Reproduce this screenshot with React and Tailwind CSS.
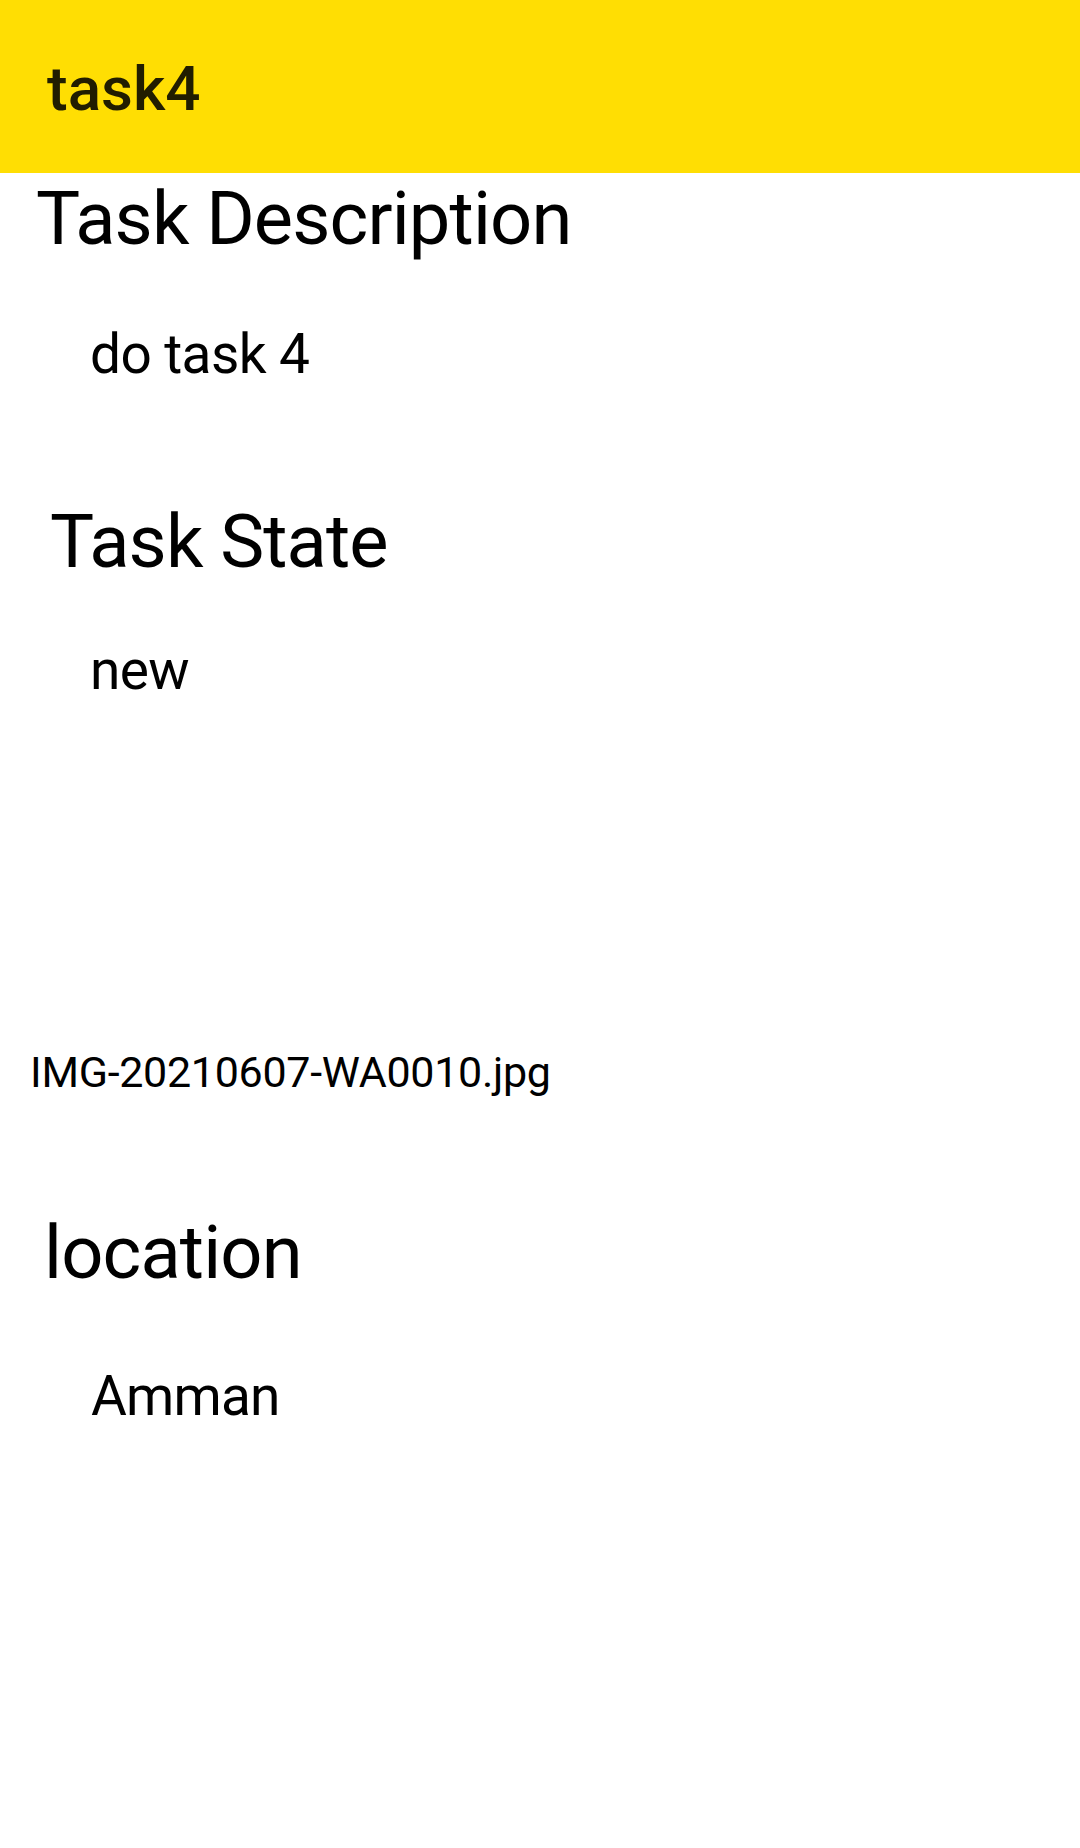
export default function App() {
  return (
    <div className="min-h-[1848px] w-[1080px] bg-white font-['Roboto',sans-serif] text-black">
      {/* Toolbar */}
      <header className="h-[173px] bg-[#ffde03] pl-[47px] pt-[58px]">
        <h1 className="text-[62px] font-medium leading-none text-[#211d00]">task4</h1>
      </header>

      {/* Task details */}
      <div className="flex flex-col">
        <h2 className="mt-[9px] pl-[36px] text-[74px] leading-none tracking-[-0.85px]">Task Description</h2>
        <p className="mt-[71px] pl-[90px] text-[55px] leading-none tracking-[-0.6px]">do task 4</p>

        <h2 className="mt-[123px] pl-[50px] text-[74px] leading-none tracking-[-0.85px]">Task State</h2>
        <p className="mt-[64px] pl-[90px] text-[55px] leading-none tracking-[-0.6px]">new</p>

        <p className="mt-[353px] pl-[30px] text-[43px] leading-none tracking-[-0.3px]">IMG-20210607-WA0010.jpg</p>

        <h2 className="mt-[122px] pl-[44px] text-[74px] leading-none tracking-[-0.85px]">location</h2>
        <p className="mt-[79px] pl-[91px] text-[55px] leading-none tracking-[-0.8px]">Amman</p>
      </div>
    </div>
  )
}
